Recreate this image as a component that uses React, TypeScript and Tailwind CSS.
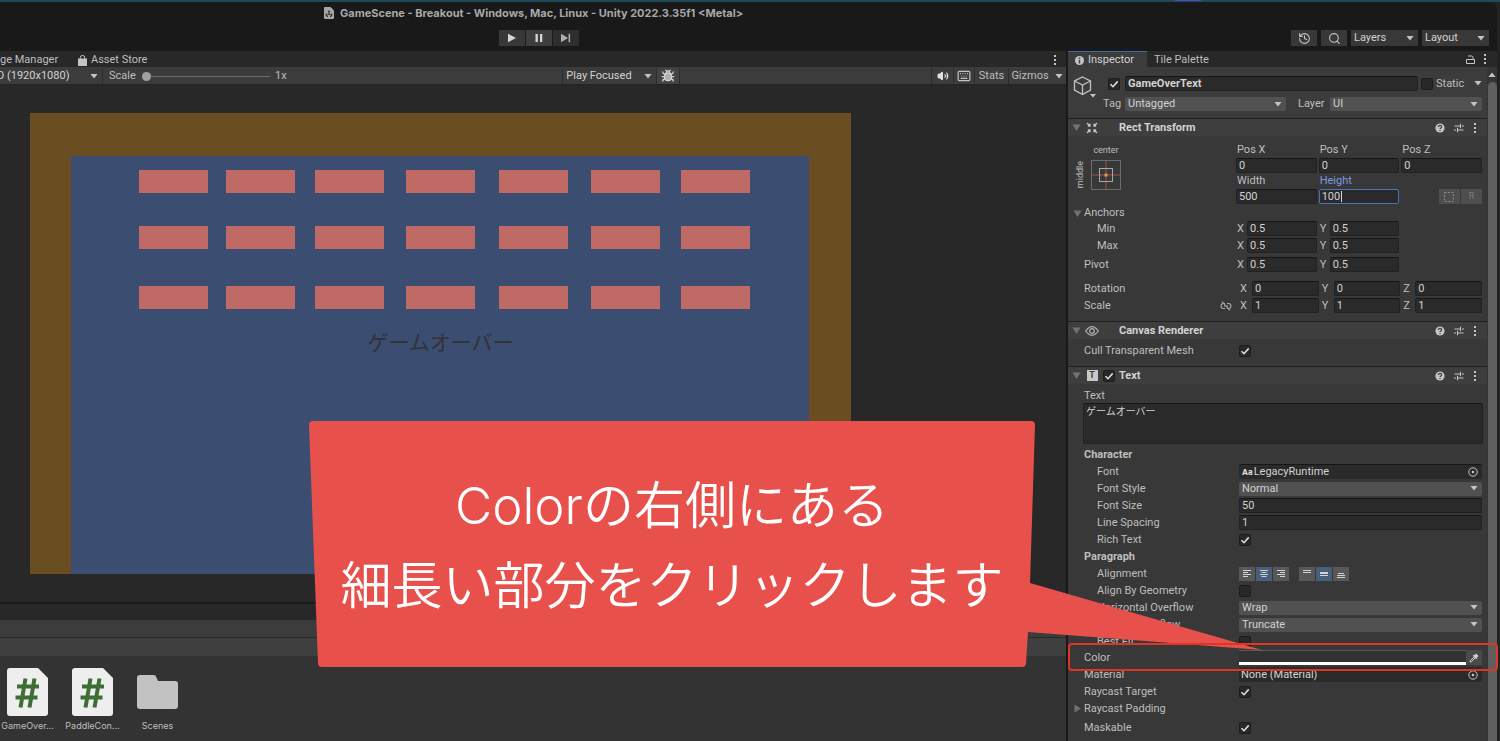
import type { ReactNode } from "react";
import { Bug, History, Keyboard, Search, Volume2 } from "lucide-react";

interface Axis {
  name: string;
  value: string;
}

// x offsets and y offsets of the bricks inside the 821x461 game view
const brickColumns = [109, 196, 285, 376, 469, 561, 651];
const brickRows = [57, 113, 173];

const assets = [
  { name: "GameOver...", type: "script" },
  { name: "PaddleCon...", type: "script" },
  { name: "Scenes", type: "folder" },
];

function Arrow({ className = "" }: { className?: string }) {
  return (
    <svg viewBox="0 0 8 5" className={`w-2 h-[5px] shrink-0 fill-[#c4c4c4] ${className}`}>
      <path d="M0.5 0h7L4 4.5z" />
    </svg>
  );
}

function Foldout({ closed = false }: { closed?: boolean }) {
  return (
    <svg viewBox="0 0 9 9" className={`w-[9px] h-[9px] shrink-0 fill-[#727272] ${closed ? "-rotate-90" : ""}`}>
      <path d="M0.5 1.5h8l-4 6.500z" />
    </svg>
  );
}

function Kebab() {
  return (
    <svg viewBox="0 0 4 12" className="w-1 h-3 shrink-0 fill-[#c4c4c4]">
      <rect x="1" y="1" width="2" height="2" />
      <rect x="1" y="5" width="2" height="2" />
      <rect x="1" y="9" width="2" height="2" />
    </svg>
  );
}

function Check({ id, label, checked = false }: { id: string; label?: string; checked?: boolean }) {
  return (
    <span className="relative w-3 h-3 shrink-0">
      <input
        id={id}
        type="checkbox"
        aria-label={label}
        defaultChecked={checked}
        className="peer block appearance-none w-3 h-3 rounded-xs bg-[#282828] border border-[#1c1c1c]"
      />
      <svg
        viewBox="0 0 12 12"
        className="absolute inset-0 hidden peer-checked:block pointer-events-none fill-none stroke-[#dcdcdc]"
        strokeWidth="1.6"
      >
        <path d="M2.5 6.2l2.5 2.5L9.7 3.4" />
      </svg>
    </span>
  );
}

function Dropdown({ id, value, label, className = "" }: { id: string; value: string; label?: string; className?: string }) {
  return (
    <span className={`relative flex items-center ${className}`}>
      <select id={id} aria-label={label} className="appearance-none w-full h-full pl-[3px] pr-3 text-[#d2d2d2] outline-none">
        <option>{value}</option>
      </select>
      <Arrow className="absolute right-[4px] pointer-events-none" />
    </span>
  );
}

interface FieldProps {
  id: string;
  value: string;
  label?: string;
  editing?: boolean;
  className?: string;
}

function Field({ id, value, label, editing = false, className = "" }: FieldProps) {
  const border = editing ? "border-[#4a74b8]" : "border-[#212121] border-t-[#161616]";
  return (
    <input
      id={id}
      type="text"
      aria-label={label}
      defaultValue={value}
      className={`min-w-0 h-[15px] px-[2px] rounded-xs bg-[#2a2a2a] border text-[#d2d2d2] outline-none ${border} ${className}`}
    />
  );
}

function ComponentHeader({ title, icon, toggle }: { title: string; icon: ReactNode; toggle?: ReactNode }) {
  return (
    <div className="flex items-center h-[18px] bg-[#3e3e3e] border-t border-[#1f1f1f] pl-1 pr-[10px]">
      <Foldout />
      <span className="w-[22px] flex justify-center">{icon}</span>
      <span className="w-4 flex items-center">{toggle}</span>
      <h2 className="flex-1 font-bold text-[#d2d2d2]">{title}</h2>
      <div className="flex items-center gap-[9px]">
        <button type="button" aria-label="Help">
          <svg viewBox="0 0 10 10" className="block w-[10px] h-[10px]">
            <circle cx="5" cy="5" r="4.6" fill="#c4c4c4" />
            <path d="M3.4 3.9c0-2 3.2-2 3.2-.1 0 1.1-1.6 1.1-1.6 2.3M5 7v1.1" fill="none" stroke="#3e3e3e" strokeWidth="1.2" />
          </svg>
        </button>
        <button type="button" aria-label="Presets">
          <svg viewBox="0 0 10 10" className="block w-[10px] h-[10px] stroke-[#c4c4c4]" strokeWidth="1.1">
            <path d="M0.5 3h6M8 3h2M6.5 0.8v4.4M0 7h2M3.5 7h6M3.5 4.8v4.4" />
          </svg>
        </button>
        <button type="button" aria-label="More">
          <Kebab />
        </button>
      </div>
    </div>
  );
}

function Row({ label, htmlFor, indent = false, children }: { label: string; htmlFor?: string; indent?: boolean; children?: ReactNode }) {
  return (
    <div className="flex h-[17px] items-center pr-[5px]">
      <label htmlFor={htmlFor} className={`w-[171px] shrink-0 whitespace-nowrap ${indent ? "pl-[29px]" : "pl-4"}`}>
        {label}
      </label>
      {children}
    </div>
  );
}

function AxisFields({ name, axes, wide = false }: { name: string; axes: Axis[]; wide?: boolean }) {
  return (
    <div className="grid grid-cols-3 gap-[2px] flex-1">
      {axes.map((axis) => (
        <div key={axis.name} className="flex items-center">
          <label htmlFor={`${name}-${axis.name}`} className={`shrink-0 pl-px ${wide ? "w-[13px]" : "w-[11px]"}`}>
            {axis.name}
          </label>
          <Field id={`${name}-${axis.name}`} value={axis.value} className="flex-1" />
        </div>
      ))}
    </div>
  );
}

function AlignButton({ label, d, active = false }: { label: string; d: string; active?: boolean }) {
  return (
    <button
      type="button"
      aria-label={label}
      className={`w-4 h-[14px] flex items-center justify-center ${active ? "bg-[#46607c]" : "bg-[#585858]"}`}
    >
      <svg viewBox="0 0 10 10" className="w-[10px] h-[10px] stroke-[#d2d2d2]" strokeWidth="1">
        <path d={d} />
      </svg>
    </button>
  );
}

function PickerIcon() {
  return (
    <svg viewBox="0 0 10 10" className="block w-[10px] h-[10px]">
      <circle cx="5" cy="5" r="4.2" fill="none" stroke="#c4c4c4" />
      <circle cx="5" cy="5" r="1.3" fill="#c4c4c4" />
    </svg>
  );
}

function TitleBar() {
  return (
    <header className="h-[49px] bg-[#191919] rounded-tr-lg shrink-0">
      <div className="flex items-center h-[22px] pl-[324px] gap-[6px]">
        <svg viewBox="0 0 10 12" className="w-[10px] h-3">
          <path d="M1 0h5.5L10 3.5V11a1 1 0 0 1-1 1H1a1 1 0 0 1-1-1V1a1 1 0 0 1 1-1z" fill="#a8a8a8" />
          <path d="M5 7V4.2M5 7l-2.4 1.4M5 7l2.4 1.4M3.8 4.2h2.4M2.2 6.4v2.4L4 9.8M7.8 6.4v2.4L6 9.8" fill="none" stroke="#191919" strokeWidth="0.9" />
        </svg>
        <h1 className="font-bold text-[#a8a8a8] whitespace-nowrap font-['Inter',sans-serif]">
          GameScene - Breakout - Windows, Mac, Linux - Unity 2022.3.35f1 &lt;Metal&gt;
        </h1>
      </div>
      <div className="flex items-center justify-between h-[27px] pt-px pl-[499px] pr-2">
        <div className="flex gap-px">
          <button type="button" aria-label="Play" className="w-[26px] h-4 bg-[#383838] flex items-center justify-center">
            <svg viewBox="0 0 8 10" className="w-2 h-[10px] fill-[#d6d6d6]"><path d="M0 0.8v8.4L8 5z" /></svg>
          </button>
          <button type="button" aria-label="Pause" className="w-[26px] h-4 bg-[#3e3e3e] flex items-center justify-center">
            <svg viewBox="0 0 8 10" className="w-2 h-[10px] fill-[#d6d6d6]"><path d="M0.5 1h2.3v8H0.5zM5 1h2.3v8H5z" /></svg>
          </button>
          <button type="button" aria-label="Step" className="w-[26px] h-4 bg-[#2e2e2e] flex items-center justify-center">
            <svg viewBox="0 0 10 10" className="w-[10px] h-[10px] fill-[#b0b0b0]"><path d="M0 0.8v8.4L7 5zM7.6 0.8h1.5v8.4H7.6z" /></svg>
          </button>
        </div>
        <div className="flex gap-1">
          <button type="button" aria-label="Undo history" className="w-[26px] h-4 bg-[#383838] flex items-center justify-center">
            <History size={13} className="text-[#c4c4c4]" />
          </button>
          <button type="button" aria-label="Search" className="w-[26px] h-4 bg-[#383838] flex items-center justify-center">
            <Search size={13} className="text-[#c4c4c4]" />
          </button>
          <Dropdown id="layers" label="Layers" value="Layers" className="w-[67px] h-4 bg-[#383838]" />
          <Dropdown id="layout" label="Layout" value="Layout" className="w-[67px] h-4 bg-[#383838]" />
        </div>
      </div>
    </header>
  );
}

function GameView() {
  return (
    <section className="flex flex-col flex-1 min-h-0">
      <div className="flex items-center h-4 shrink-0 bg-[#282828] pt-[2px] pr-[9px]">
        <span className="w-[78px] whitespace-nowrap">ge Manager</span>
        <svg viewBox="0 0 9 11" className="w-[9px] h-[11px] mr-1">
          <path d="M0 3.5h9V11H0z" fill="#c4c4c4" />
          <path d="M2.3 4.5V2.6a2.2 2.2 0 0 1 4.4 0v1.9" fill="none" stroke="#c4c4c4" />
        </svg>
        <span className="flex-1 whitespace-nowrap">Asset Store</span>
        <button type="button" aria-label="Game view menu"><Kebab /></button>
      </div>
      <div className="flex items-stretch h-[18px] pt-px shrink-0 bg-[#3c3c3c] border-b border-[#242424]">
        <Dropdown id="aspect" label="Aspect" value="D (1920x1080)" className="-ml-[6px] w-[109px] border-r border-[#2c2c2c]" />
        <label htmlFor="zoom" className="w-[39px] pl-[6px] self-center">Scale</label>
        <input
          id="zoom"
          type="range"
          min="1"
          max="5"
          defaultValue="1"
          className="appearance-none self-center w-32 h-px bg-[#6a6a6a] [&::-webkit-slider-thumb]:appearance-none [&::-webkit-slider-thumb]:w-[9px] [&::-webkit-slider-thumb]:h-[9px] [&::-webkit-slider-thumb]:rounded-full [&::-webkit-slider-thumb]:bg-[#a0a0a0]"
        />
        <span className="self-center pl-[5px]">1x</span>
        <span className="flex-11" />
        <Dropdown id="play-mode" label="Play mode" value="Play Focused" className="w-[94px] border-l border-[#2c2c2c]" />
        <button type="button" aria-label="Frame debugger" className="w-6 flex items-center justify-center bg-[#444] border-x border-[#2c2c2c]">
          <Bug size={14} strokeWidth={2} className="text-[#d2d2d2] fill-[#b0b0b0]" />
        </button>
        <span className="flex-10" />
        <button type="button" aria-label="Mute audio" className="w-[22px] flex items-center justify-center border-l border-[#2c2c2c]">
          <Volume2 size={12} className="text-[#e0e0e0] fill-[#e0e0e0]" />
        </button>
        <button type="button" aria-label="Shortcuts" className="w-[22px] flex items-center justify-center border-x border-[#2c2c2c]">
          <Keyboard size={14} className="text-[#c4c4c4]" />
        </button>
        <button type="button" className="w-[34px] border-r border-[#2c2c2c]">Stats</button>
        <button type="button" className="w-[42px]">Gizmos</button>
        <button type="button" aria-label="Gizmo options" className="w-[15px] flex items-center justify-center">
          <Arrow />
        </button>
      </div>
      <div className="flex-1 min-h-0 bg-[#282828] pt-7 pl-[30px] pr-[215px]">
        <div className="relative">
          <svg viewBox="0 0 821 461" className="block w-full" aria-hidden="true">
            <rect width="821" height="461" fill="#6b4d22" />
            <rect x="41" y="43" width="738" height="418" fill="#3c4d72" />
            {brickRows.map((y) =>
              brickColumns.map((x) => <rect key={`${x}-${y}`} x={x} y={y} width="69" height="23" fill="#c06a66" />)
            )}
          </svg>
          <p className="absolute inset-x-0 top-[213px] text-center text-[21px] leading-[30px] text-[#323232] font-['Noto_Sans_CJK_JP',sans-serif]">
            ゲームオーバー
          </p>
        </div>
      </div>
    </section>
  );
}

function ProjectPanel() {
  return (
    <section className="shrink-0 bg-[#333333] border-t-2 border-[#1a1a1a]">
      <div className="h-4 bg-[#282828]" />
      <div className="h-[18px] bg-[#3c3c3c] border-b border-[#2a2a2a]" />
      <div className="h-[18px] bg-[#3f3f3f]" />
      <ul className="flex gap-[10px] pt-3 pb-[9px]">
        {assets.map((asset) => (
          <li key={asset.name} className="w-[55px] flex flex-col items-center">
            {asset.type === "script" ? (
              <svg viewBox="0 0 41 48" className="w-[41px] h-12">
                <path d="M3 0h28l10 10v35a3 3 0 0 1-3 3H3a3 3 0 0 1-3-3V3a3 3 0 0 1 3-3z" fill="#eeeeee" />
                <path d="M18.500 10.500l-5 29M27.500 10.500l-5 29M10 18.500h22M8.500 29.500h22" fill="none" stroke="#3f6e34" strokeWidth="4" />
              </svg>
            ) : (
              <svg viewBox="0 0 41 48" className="w-[41px] h-12">
                <path d="M3 7h14q1.500 0 2 1.500L21 13h17a3 3 0 0 1 3 3v22a3 3 0 0 1-3 3H3a3 3 0 0 1-3-3V10a3 3 0 0 1 3-3z" fill="#c2c2c2" />
              </svg>
            )}
            <span className="mt-1 text-[9px] leading-3 whitespace-nowrap font-['Inter',sans-serif]">{asset.name}</span>
          </li>
        ))}
      </ul>
    </section>
  );
}

function ObjectHeader() {
  return (
    <div className="relative h-[51px] bg-[#3c3c3c] pt-[9px] pl-[35px] pr-[5px]">
      <button type="button" aria-label="Object icon" className="absolute left-[5px] top-[9px]">
        <svg viewBox="0 0 24 22" className="block w-6 h-[22px]">
          <path d="M9.500 1l8 4v9l-8 4.500-8-4.500V5zM1.500 5l8 4 8-4M9.500 9v9.500" fill="none" stroke="#c4c4c4" strokeWidth="1.300" />
          <path d="M17 18h6l-3 3.500z" fill="#c4c4c4" />
        </svg>
      </button>
      <div className="flex items-center pl-[5px]">
        <Check id="active" label="Active" checked />
        <Field id="object-name" label="Name" value="GameOverText" className="ml-[5px] flex-1 font-bold" />
        <span className="ml-[3px] mr-[3px] flex"><Check id="static" /></span>
        <label htmlFor="static" className="w-[30px]">Static</label>
        <Arrow className="ml-[8px]" />
      </div>
      <div className="flex items-center mt-[6px]">
        <label htmlFor="tag" className="w-[22px]">Tag</label>
        <Dropdown id="tag" value="Untagged" className="flex-1 h-[14px] rounded-xs bg-[#515151]" />
        <label htmlFor="layer" className="pl-3 w-11">Layer</label>
        <Dropdown id="layer" value="UI" className="w-[152px] h-[14px] rounded-xs bg-[#515151]" />
      </div>
    </div>
  );
}

function RectTransform() {
  return (
    <section>
      <ComponentHeader
        title="Rect Transform"
        icon={
          <svg viewBox="0 0 12 12" className="w-3 h-3" fill="none" stroke="#c4c4c4" strokeWidth="1.300">
            <path d="M1 1l3 3M11 1L8 4M1 11l3-3M11 11L8 8M1.800 4h2.200V1.800M10.200 4H8V1.800M1.800 8h2.200v2.200M10.200 8H8v2.200" />
          </svg>
        }
      />
      <div className="flex pt-[6px] pr-[5px]">
        <div className="w-[168px] pl-[7px] flex text-[9px]">
          <span className="w-4 pt-1 leading-[10px] flex items-center">
            <span className="[writing-mode:vertical-rl] rotate-180">middle</span>
          </span>
          <div className="flex flex-col items-center">
            <span className="leading-4">center</span>
            <button type="button" aria-label="Anchor presets" className="mt-[2px]">
              <svg viewBox="0 0 30 30" className="block w-[30px] h-[30px]" fill="none">
                <rect x="0.5" y="0.5" width="29" height="29" stroke="#6c6c6c" />
                <path d="M15 1v28M1 15h28" stroke="#a04c4c" />
                <rect x="8.500" y="8.500" width="13" height="13" stroke="#a8a8a8" />
                <rect x="13.500" y="13.500" width="3" height="3" fill="#d8a03c" />
              </svg>
            </button>
          </div>
        </div>
        <div className="flex-1 grid grid-cols-3 gap-x-[2px] leading-4">
          <label htmlFor="pos-x" className="pl-px">Pos X</label>
          <label htmlFor="pos-y" className="pl-px">Pos Y</label>
          <label htmlFor="pos-z" className="pl-px">Pos Z</label>
          <Field id="pos-x" value="0" />
          <Field id="pos-y" value="0" />
          <Field id="pos-z" value="0" />
          <label htmlFor="width" className="pl-px">Width</label>
          <label htmlFor="height" className="pl-px text-[#7a9ae0]">Height</label>
          <span />
          <Field id="width" value="500" />
          <span className="relative flex">
            <Field id="height" value="100" editing className="w-full" />
            <span className="absolute left-[22px] top-[2px] w-px h-[11px] bg-[#d2d2d2]" />
          </span>
          <span className="flex justify-end gap-px">
            <button type="button" aria-label="Blueprint mode" className="w-[21px] h-[15px] bg-[#4e4e4e] flex items-center justify-center">
              <svg viewBox="0 0 10 10" className="w-[10px] h-[10px]" fill="none" stroke="#8a8a8a" strokeDasharray="2 1.500">
                <rect x="0.5" y="0.5" width="9" height="9" />
              </svg>
            </button>
            <button type="button" className="w-[21px] h-[15px] bg-[#4e4e4e] text-[#808080] text-[9px] leading-[15px]">R</button>
          </span>
        </div>
      </div>
      <div className="flex items-center h-4 pt-[2px] pl-[5px] gap-[2px]">
        <Foldout />
        <span>Anchors</span>
      </div>
      <div className="flex items-center h-[17px] pr-[5px]">
        <span className="w-[168px] pl-[29px]">Min</span>
        <AxisFields name="min" axes={[{ name: "X", value: "0.5" }, { name: "Y", value: "0.5" }]} />
      </div>
      <div className="flex items-center h-[17px] pr-[5px]">
        <span className="w-[168px] pl-[29px]">Max</span>
        <AxisFields name="max" axes={[{ name: "X", value: "0.5" }, { name: "Y", value: "0.5" }]} />
      </div>
      <div className="flex items-center h-[17px] mt-[2px] pr-[5px]">
        <span className="w-[168px] pl-4">Pivot</span>
        <AxisFields name="pivot" axes={[{ name: "X", value: "0.5" }, { name: "Y", value: "0.5" }]} />
      </div>
      <div className="flex items-center h-[17px] mt-[7px] pr-[5px]">
        <span className="w-[171px] pl-4">Rotation</span>
        <AxisFields name="rotation" wide axes={[{ name: "X", value: "0" }, { name: "Y", value: "0" }, { name: "Z", value: "0" }]} />
      </div>
      <div className="flex items-center h-[17px] pr-[5px] mb-[7px]">
        <span className="w-[171px] pl-4 pr-[7px] flex items-center justify-between">
          Scale
          <button type="button" aria-label="Constrain proportions">
            <svg viewBox="0 0 12 10" className="block w-3 h-[10px]" fill="none" stroke="#a8a8a8" strokeWidth="1.100">
              <path d="M5 2.500H3.500a2.500 2.500 0 0 0 0 5H5M7 2.500h1.500a2.500 2.500 0 0 1 0 5H7M4 5h4M2 0.500l8 9" />
            </svg>
          </button>
        </span>
        <AxisFields name="scale" wide axes={[{ name: "X", value: "1" }, { name: "Y", value: "1" }, { name: "Z", value: "1" }]} />
      </div>
    </section>
  );
}

function TextComponent() {
  const dropdown = "flex-1 h-[14px] rounded-xs bg-[#515151]";
  return (
    <section>
      <ComponentHeader
        title="Text"
        icon={
          <span className="w-[11px] h-[11px] bg-[#c8c8c8] text-[#3e3e3e] text-[9px] leading-[11px] font-bold text-center">T</span>
        }
        toggle={<Check id="text-enabled" label="Text enabled" checked />}
      />
      <div className="pt-[5px] pl-[15px] pr-1">
        <label htmlFor="text" className="block pl-px leading-[14px]">Text</label>
        <textarea
          id="text"
          defaultValue="ゲームオーバー"
          className="block w-full h-[41px] px-[2px] rounded-xs bg-[#2a2a2a] border border-[#212121] border-t-[#161616] text-[10px] leading-[14px] text-[#d2d2d2] resize-none outline-none font-['Noto_Sans_CJK_JP',sans-serif]"
        />
      </div>
      <h3 className="mt-[2px] pl-4 h-[17px] leading-[17px] font-bold">Character</h3>
      <Row label="Font" htmlFor="font" indent>
        <div className="flex flex-1 items-center h-[15px] pl-[3px] pr-1 rounded-xs bg-[#2a2a2a] border-t border-[#161616]">
          <span className="text-[8px] font-bold text-[#e0e0e0] font-['Inter',sans-serif]">Aa</span>
          <input id="font" type="text" defaultValue="LegacyRuntime" className="flex-1 min-w-0 pl-px text-[#d2d2d2] outline-none" />
          <button type="button" aria-label="Pick font"><PickerIcon /></button>
        </div>
      </Row>
      <Row label="Font Style" htmlFor="font-style" indent>
        <Dropdown id="font-style" value="Normal" className={dropdown} />
      </Row>
      <Row label="Font Size" htmlFor="font-size" indent>
        <Field id="font-size" value="50" className="flex-1" />
      </Row>
      <Row label="Line Spacing" htmlFor="line-spacing" indent>
        <Field id="line-spacing" value="1" className="flex-1" />
      </Row>
      <Row label="Rich Text" htmlFor="rich-text" indent>
        <Check id="rich-text" checked />
      </Row>
      <h3 className="pl-4 h-[17px] leading-[17px] font-bold">Paragraph</h3>
      <Row label="Alignment" indent>
        <div className="flex gap-px">
          <AlignButton label="Left" d="M1 1.500h8M1 3.500h5M1 5.500h8M1 7.500h5" />
          <AlignButton label="Center" active d="M1 1.500h8M2.500 3.500h5M1 5.500h8M2.500 7.500h5" />
          <AlignButton label="Right" d="M1 1.500h8M4 3.500h5M1 5.500h8M4 7.500h5" />
        </div>
        <div className="flex gap-px ml-[10px]">
          <AlignButton label="Top" d="M1 1.500h8M1 3.500h8" />
          <AlignButton label="Middle" active d="M1 3.500h8M1 4.500h8M1 6.500h8" />
          <AlignButton label="Bottom" d="M2 4.500h6M1 6.500h8M1 8.500h8" />
        </div>
      </Row>
      <Row label="Align By Geometry" htmlFor="align-geometry" indent>
        <Check id="align-geometry" />
      </Row>
      <Row label="Horizontal Overflow" htmlFor="h-overflow" indent>
        <Dropdown id="h-overflow" value="Wrap" className={dropdown} />
      </Row>
      <Row label="Vertical Overflow" htmlFor="v-overflow" indent>
        <Dropdown id="v-overflow" value="Truncate" className={dropdown} />
      </Row>
      <Row label="Best Fit" htmlFor="best-fit" indent>
        <Check id="best-fit" />
      </Row>
      <div className="-mt-px">
        <Row label="Color" htmlFor="color">
          <button id="color" type="button" aria-label="Color" className="flex-1 h-[15px] bg-[#323232] border-t border-t-[#5a5a5a] border-b-3 border-b-white" />
          <button type="button" aria-label="Pick color" className="w-4 h-[15px] bg-[#4a4a4a] flex items-center justify-center">
            <svg viewBox="0 0 10 10" className="w-[10px] h-[10px]">
              <path d="M7 0.500l2.500 2.500-1.700 1.700.5.500-1 1L3.800 2.700l1-1 .5.500z" fill="#d2d2d2" />
              <path d="M5 4L1.500 7.500 1 9l1.500-.5L6 5" fill="none" stroke="#d2d2d2" />
            </svg>
          </button>
        </Row>
        <Row label="Material" htmlFor="material">
          <div className="flex flex-1 items-center h-[15px] pl-[2px] pr-1 rounded-xs bg-[#2a2a2a]">
            <input id="material" type="text" defaultValue="None (Material)" className="flex-1 min-w-0 text-[#d2d2d2] outline-none" />
            <button type="button" aria-label="Pick material"><PickerIcon /></button>
          </div>
        </Row>
        <Row label="Raycast Target" htmlFor="raycast-target">
          <Check id="raycast-target" checked />
        </Row>
        <div className="flex items-center h-[17px] pl-[5px] gap-[2px]">
          <Foldout closed />
          <span>Raycast Padding</span>
        </div>
      </div>
      <div className="pt-[2px]">
        <Row label="Maskable" htmlFor="maskable">
          <Check id="maskable" checked />
        </Row>
      </div>
    </section>
  );
}

function Inspector() {
  return (
    <aside className="w-[431px] shrink-0 flex flex-col min-h-0 bg-[#383838] border-l-2 border-[#191919]">
      <div className="flex items-stretch h-4 shrink-0 bg-[#282828] pr-[10px]">
        <button type="button" className="w-[79px] flex items-center pt-px pl-[7px] gap-1 bg-[#3c3c3c] border-t border-[#3a6aa8] text-[#d2d2d2]">
          <svg viewBox="0 0 10 10" className="w-[9px] h-[9px]">
            <circle cx="5" cy="5" r="5" fill="#c4c4c4" />
            <path d="M5 1.800v1.700M5 4.500v3.700" stroke="#3c3c3c" strokeWidth="1.600" />
          </svg>
          Inspector
        </button>
        <button type="button" className="flex-1 text-left pl-[7px] pt-[2px]">Tile Palette</button>
        <button type="button" aria-label="Lock" className="mr-2">
          <svg viewBox="0 0 9 9" className="block w-[9px] h-[9px]" fill="none" stroke="#c4c4c4">
            <path d="M0.500 4.500h8v4h-8zM2 1h3.500q1.500 0 1.500 1.500v2" />
          </svg>
        </button>
        <button type="button" aria-label="Inspector menu"><Kebab /></button>
      </div>
      <div className="flex flex-1 min-h-0">
        <div className="flex-1 min-w-0 overflow-hidden">
          <ObjectHeader />
          <RectTransform />
          <section>
            <ComponentHeader
              title="Canvas Renderer"
              icon={
                <svg viewBox="0 0 14 10" className="w-[14px] h-[10px]" fill="none" stroke="#b0b0b0" strokeWidth="1.200">
                  <path d="M0.700 5Q7-3.600 13.300 5 7 13.600 0.700 5z" />
                  <circle cx="7" cy="5" r="2.300" />
                </svg>
              }
            />
            <div className="pt-[3px] pb-[7px]">
              <Row label="Cull Transparent Mesh" htmlFor="cull">
                <Check id="cull" checked />
              </Row>
            </div>
          </section>
          <TextComponent />
        </div>
        <div className="w-[10px] shrink-0 flex flex-col items-center bg-[#353535] pt-[5px]">
          <Arrow className="rotate-180" />
          <div className="mt-[5px] flex-1 w-[9px] rounded-t-md bg-[#5f5f5f]" />
        </div>
      </div>
    </aside>
  );
}

function Callout() {
  return (
    <div className="absolute top-[421px] right-[238px] w-[953px] h-[246px] pointer-events-none">
      <svg viewBox="0 0 953 246" className="absolute inset-0 w-full h-full fill-[#e8514b]">
        <path d="M4 0H722q4 0 4 4L721 162 953 229 719 211 717 242q0 4-4 4H13q-4 0-4-4L0 4q0-4 4-4z" />
      </svg>
      <p className="relative w-[726px] h-full flex flex-col items-center justify-center text-center text-white text-[51px] leading-[77px] font-[350] whitespace-nowrap font-['Noto_Sans_CJK_JP',sans-serif]">
        <span className="font-['Inter','Noto_Sans_CJK_JP',sans-serif]">Colorの右側にある</span>
        <span>細長い部分をクリックします</span>
      </p>
    </div>
  );
}

export default function App() {
  return (
    <div className="relative h-screen flex flex-col overflow-hidden bg-[#222222] text-[11px] leading-[14px] text-[#bebebe] font-['Roboto',sans-serif]">
      <div className="h-[2px] shrink-0 bg-[#1f4a5a]">
        <div className="h-px w-[26px] ml-auto mr-[299px] bg-[#5048c0]" />
      </div>
      <div className="flex-1 min-h-0 flex flex-col mr-[3px]">
        <TitleBar />
        <div className="flex flex-1 min-h-0">
          <main className="flex-1 min-w-0 flex flex-col">
            <GameView />
            <ProjectPanel />
          </main>
          <Inspector />
        </div>
      </div>
      <Callout />
      <div className="absolute top-[643px] right-[2px] w-[430px] h-7 rounded-sm border-2 border-[#e03426] pointer-events-none" />
    </div>
  );
}
